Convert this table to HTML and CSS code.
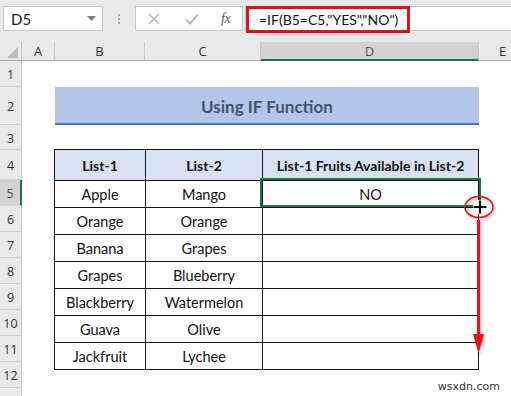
FILE: index.html
```html
<!DOCTYPE html>
<html>
<head>
<meta charset="utf-8">
<link rel="stylesheet" href="styles.css">
</head>
<body>
<div class="app">
  <div class="fbar">
    <div class="namebox">
      <span class="nb-text">D5</span>
      <svg class="nb-arrow" width="9" height="5" viewBox="0 0 9 5"><polygon points="0,0 9,0 4.5,5" fill="#7a7a7a"/></svg>
    </div>
    <div class="dots"><i></i><i></i><i></i></div>
    <div class="fbtns">
      <svg class="ic" width="12" height="12" viewBox="0 0 12 12"><path d="M1 1 L11 11 M11 1 L1 11" stroke="#b9b9b9" stroke-width="1.6" fill="none"/></svg>
      <svg class="ic" width="14" height="12" viewBox="0 0 14 12"><path d="M1 6.5 L5 10.5 L13 1.5" stroke="#b9b9b9" stroke-width="2" fill="none"/></svg>
      <span class="fx">fx</span>
    </div>
    <div class="finput"><span class="formula">=IF(B5=C5,"YES","NO")</span></div>
  </div>

  <div class="sheet">
    <div class="corner"><svg width="22" height="19" viewBox="0 0 22 19"><polygon points="18,5 18,16 7,16" fill="#bcbcbc"/></svg></div>
    <div class="ch">A</div>
    <div class="ch">B</div>
    <div class="ch">C</div>
    <div class="ch ch-sel">D</div>
    <div class="ch ch-last">E</div>

    <div class="rh r1">1</div>
    <div class="rh r2">2</div>
    <div class="rh r3">3</div>
    <div class="rh r4">4</div>
    <div class="rh r5 rh-sel">5</div>
    <div class="rh r6">6</div>
    <div class="rh r7">7</div>
    <div class="rh r8">8</div>
    <div class="rh r9">9</div>
    <div class="rh r10">10</div>
    <div class="rh r11">11</div>
    <div class="rh r12">12</div>
    <div class="rh r13"></div>

    <div class="title">Using IF Function</div>

    <table class="tbl">
      <tr class="hd"><th>List-1</th><th>List-2</th><th>List-1 Fruits Available in List-2</th></tr>
      <tr><td>Apple</td><td>Mango</td><td>NO</td></tr>
      <tr><td>Orange</td><td>Orange</td><td></td></tr>
      <tr><td>Banana</td><td>Grapes</td><td></td></tr>
      <tr><td>Grapes</td><td>Blueberry</td><td></td></tr>
      <tr><td>Blackberry</td><td>Watermelon</td><td></td></tr>
      <tr><td>Guava</td><td>Olive</td><td></td></tr>
      <tr><td>Jackfruit</td><td>Lychee</td><td></td></tr>
    </table>

    <div class="sel"></div>

    <svg class="annot" width="50" height="170" viewBox="0 0 50 170">
      <defs>
        <filter id="sh" filterUnits="userSpaceOnUse" x="0" y="0" width="50" height="170">
          <feDropShadow dx="1" dy="1.5" stdDeviation="1.2" flood-color="#000" flood-opacity="0.35"/>
        </filter>
      </defs>
      <ellipse cx="24" cy="15" rx="14" ry="10.5" fill="none" stroke="#e3151c" stroke-width="1.6" filter="url(#sh)"/>
      <path d="M25 8 V22 M18 15 H32" stroke="#fff" stroke-width="5" fill="none"/>
      <path d="M25 8.5 V21.5 M18.5 15 H31.5" stroke="#000" stroke-width="2.2" fill="none"/>
      <rect x="22" y="28" width="3" height="118" fill="#e3151c" filter="url(#sh)"/>
      <polygon points="18,142 29,142 23.5,161" fill="#e3151c" filter="url(#sh)"/>
    </svg>

    <div class="wm">wsxdn.com</div>
  </div>
</div>
</body>
</html>
```

FILE: styles.css
```css
html, body {
  margin: 0;
  padding: 0;
}
body {
  width: 511px;
  height: 396px;
  overflow: hidden;
  background: #fff;
  font-family: "Lato", "Open Sans", sans-serif;
}
.app {
  width: 511px;
  height: 396px;
  display: flex;
  flex-direction: column;
}

/* ---------- formula bar ---------- */
.fbar {
  height: 42px;
  flex: none;
  background: #e9e9e9;
  display: flex;
  align-items: flex-start;
  padding-top: 6px;
  box-sizing: border-box;
}
.namebox {
  margin-left: 3px;
  width: 100px;
  height: 25px;
  box-sizing: border-box;
  background: #fff;
  border: 1px solid #c6c6c6;
  display: flex;
  align-items: center;
  justify-content: space-between;
  padding: 0 6px 0 7px;
}
.nb-text {
  font-size: 15px;
  color: #222;
}
.nb-arrow {
  display: block;
}
.dots {
  width: 32px;
  height: 25px;
  display: flex;
  flex-direction: column;
  align-items: center;
  justify-content: center;
  gap: 2px;
}
.dots i {
  display: block;
  width: 2px;
  height: 2px;
  background: #a8a8a8;
}
.fbtns {
  width: 108px;
  height: 25px;
  box-sizing: border-box;
  background: #fff;
  border: 1px solid #c6c6c6;
  display: flex;
  align-items: center;
  padding-left: 12px;
  gap: 0;
}
.fbtns .ic {
  display: block;
}
.fbtns .ic:first-child {
  margin-right: 25px;
}
.fbtns .ic:nth-child(2) {
  margin-right: 22px;
}
.fx {
  font-family: "Liberation Serif", serif;
  font-style: italic;
  font-size: 14px;
  color: #555;
  letter-spacing: -0.5px;
}
.finput {
  margin-left: 2px;
  flex: 1;
  height: 25px;
  box-sizing: border-box;
  background: #fff;
  border-top: 1px solid #c6c6c6;
  border-bottom: 1px solid #c6c6c6;
  border-left: 1px solid #c6c6c6;
}
.formula {
  display: flex;
  align-items: center;
  margin-top: -1px;
  margin-left: 0;
  width: 164px;
  height: 27px;
  box-sizing: border-box;
  border: 3px solid #e0111b;
  padding-left: 10px;
  font-size: 14px;
  color: #111;
  background: #fff;
}

/* ---------- sheet ---------- */
.sheet {
  position: relative;
  flex: 1;
  display: grid;
  grid-template-columns: 22px 33px 90px 116px 218px 32px;
  grid-template-rows: 19px 26px 38px 25px 30px 26px 26px 26px 26px 26px 26px 26px 26px 1fr;
  background: #fff;
}
.corner {
  grid-row: 1;
  grid-column: 1;
  background: #e9e9e9;
  border-bottom: 1px solid #ababab;
  border-right: 1px solid #c9c9c9;
  box-sizing: border-box;
}
.corner svg {
  display: block;
}
.ch {
  grid-row: 1;
  background: #e9e9e9;
  border-right: 1px solid #cacaca;
  border-bottom: 1px solid #ababab;
  box-sizing: border-box;
  display: flex;
  align-items: center;
  justify-content: center;
  font-family: "Open Sans", sans-serif;
  font-size: 13px;
  color: #333;
}
.ch-sel {
  background: #d3d3d3;
  border-bottom: 2px solid #217346;
  color: #3f5f48;
}
.ch-last {
  border-right: none;
  justify-content: flex-start;
  padding-left: 20px;
}
.rh {
  grid-column: 1;
  background: #e9e9e9;
  border-right: 1px solid #c9c9c9;
  border-bottom: 1px solid #d2d2d2;
  box-sizing: border-box;
  display: flex;
  align-items: center;
  justify-content: center;
  font-family: "Open Sans", sans-serif;
  font-size: 12.5px;
  color: #333;
  padding-top: 2px;
}
.rh-sel {
  background: #d3d3d3;
  border-right: 2px solid #217346;
  color: #3f5f48;
}
.r1 { grid-row: 2; }
.r2 { grid-row: 3; }
.r3 { grid-row: 4; }
.r4 { grid-row: 5; }
.r5 { grid-row: 6; }
.r6 { grid-row: 7; }
.r7 { grid-row: 8; }
.r8 { grid-row: 9; }
.r9 { grid-row: 10; }
.r10 { grid-row: 11; }
.r11 { grid-row: 12; }
.r12 { grid-row: 13; }
.r13 { grid-row: 14; border-bottom: none; }

.title {
  grid-row: 3;
  grid-column: 3 / 6;
  background: #b4c6e7;
  border-bottom: 2px solid #4472c4;
  display: flex;
  align-items: center;
  justify-content: center;
  font-weight: bold;
  font-size: 17px;
  color: #44546a;
  padding-top: 2px;
}

.tbl {
  grid-row: 5 / 13;
  grid-column: 3 / 6;
  border-collapse: collapse;
  table-layout: fixed;
  width: 425px;
  height: 213px;
  margin-top: -1px;
  margin-left: -1px;
  font-size: 14.5px;
  color: #111;
}
.tbl th, .tbl td {
  border: 1px solid #111;
  text-align: center;
  padding: 0;
  height: 26px;
  white-space: nowrap;
}
.tbl th {
  background: #d9e1f2;
  height: 30px;
  font-weight: bold;
  font-size: 14px;
}
.tbl th:nth-child(1) { width: 90px; }
.tbl th:nth-child(2) { width: 116px; }

.sel {
  grid-row: 6;
  grid-column: 5;
  margin: -2px -2px -1px -1px;
  border: 2px solid #217346;
  z-index: 2;
}

.annot {
  position: absolute;
  left: 455px;
  top: 150px;
  z-index: 3;
}

.wm {
  position: absolute;
  right: 11px;
  bottom: 3px;
  font-family: "DejaVu Sans", sans-serif;
  font-size: 11px;
  color: #333;
}
```
